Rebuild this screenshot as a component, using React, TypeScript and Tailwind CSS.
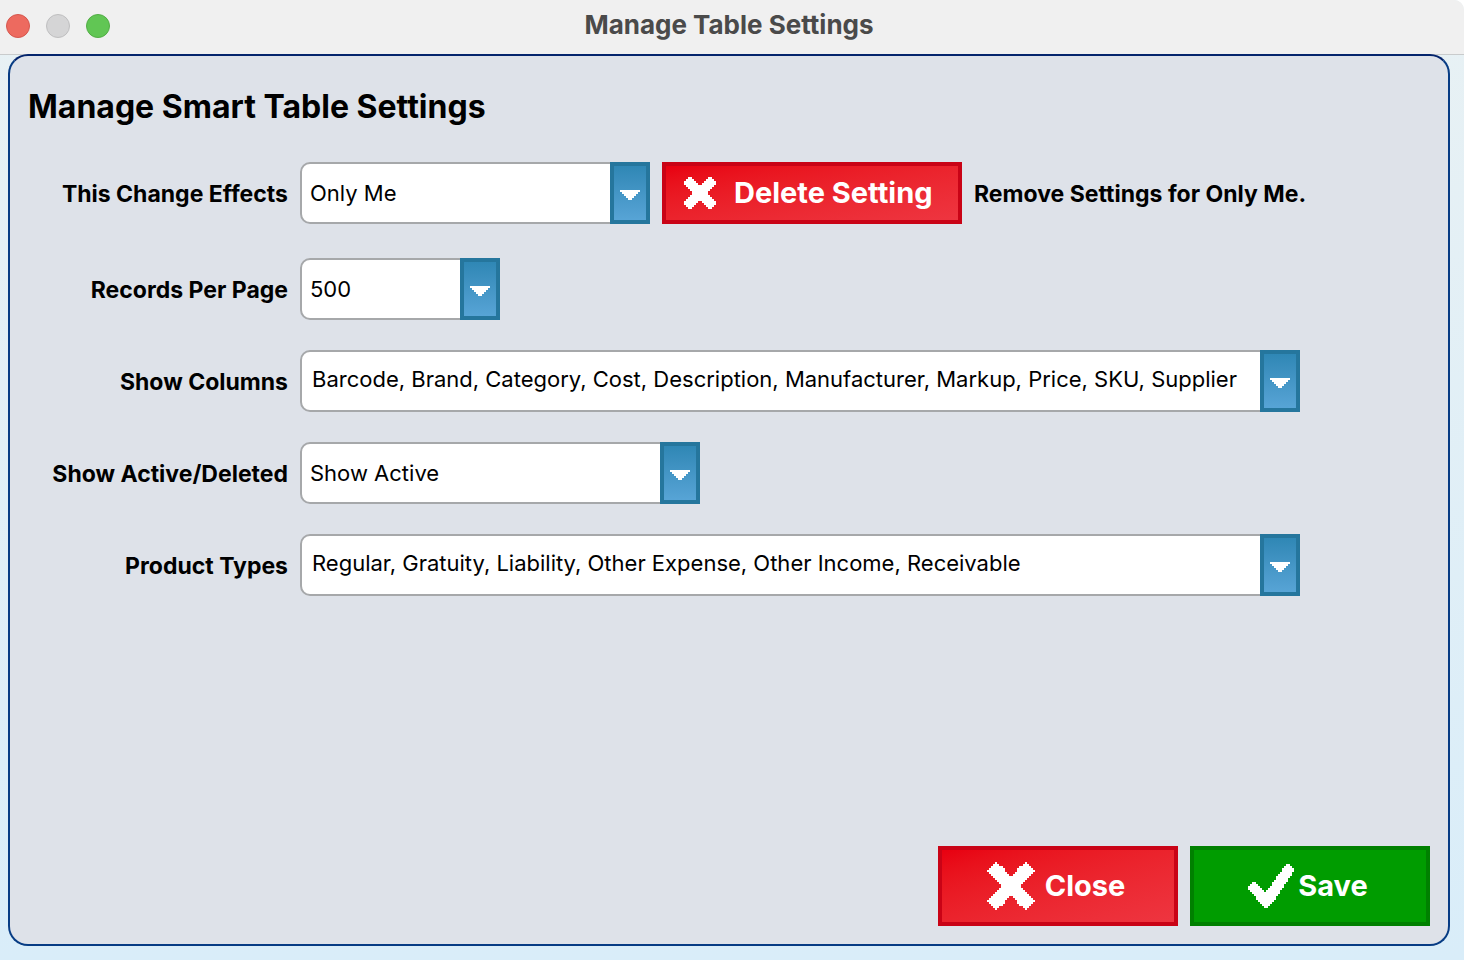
import React from "react";

type Field = {
  id: string;
  label: string;
  value: string;
  width: string;
  row: string;
  pad: string;
};

const fields: Field[] = [
  { id: "effects", label: "This Change Effects", value: "Only Me", width: "w-[350px]", row: "mb-[34px]", pad: "pl-2 pb-0" },
  { id: "records", label: "Records Per Page", value: "500", width: "w-[200px]", row: "mb-[30px]", pad: "pl-2 pb-0" },
  {
    id: "columns",
    label: "Show Columns",
    value: "Barcode, Brand, Category, Cost, Description, Manufacturer, Markup, Price, SKU, Supplier",
    width: "w-[1000px]",
    row: "mb-[30px]",
    pad: "pl-[10px] pb-1",
  },
  { id: "active", label: "Show Active/Deleted", value: "Show Active", width: "w-[400px]", row: "mb-[30px]", pad: "pl-2 pb-0" },
  {
    id: "types",
    label: "Product Types",
    value: "Regular, Gratuity, Liability, Other Expense, Other Income, Receivable",
    width: "w-[1000px]",
    row: "mb-[30px]",
    pad: "pl-[10px] pb-1",
  },
];

// Each span is [row, first cell, end cell] on the icon's pixel grid.
type Span = [number, number, number];

const smallCrossQuarter: Span[] = [
  [0, 2, 4], [1, 1, 5], [2, 0, 6], [3, 0, 7], [4, 1, 8], [5, 2, 8], [6, 3, 8], [7, 4, 8],
];

const largeCrossQuarter: Span[] = [
  [0, 4, 5], [1, 3, 6], [2, 2, 8], [3, 1, 9], [4, 0, 9], [5, 1, 10],
  [6, 2, 11], [7, 3, 12], [8, 4, 12], [9, 5, 12], [10, 6, 12], [11, 7, 12],
];

const checkSpans: Span[] = [
  [0, 19, 21], [1, 18, 22], [2, 17, 23], [3, 17, 23], [4, 16, 22], [5, 15, 22], [6, 14, 21], [7, 14, 20],
  [8, 13, 20], [9, 2, 4], [9, 12, 19], [10, 1, 5], [10, 12, 18], [11, 0, 6], [11, 11, 18], [12, 0, 7],
  [12, 10, 17], [13, 1, 8], [13, 9, 16], [14, 2, 16], [15, 3, 15], [16, 4, 14], [17, 4, 14], [18, 5, 13],
  [19, 6, 12], [20, 7, 11], [21, 8, 10],
];

const mirror = (quarter: Span[], size: number): Span[] =>
  quarter.flatMap(([y, a, b]): Span[] => [
    [y, a, b],
    [y, size - b, size - a],
    [size - 1 - y, a, b],
    [size - 1 - y, size - b, size - a],
  ]);

const smallCross = mirror(smallCrossQuarter, 16);
const largeCross = mirror(largeCrossQuarter, 24);

function PixelIcon({ spans, cols, rows, className }: { spans: Span[]; cols: number; rows: number; className: string }) {
  return (
    <svg viewBox={`0 0 ${cols} ${rows}`} className={className} fill="currentColor" shapeRendering="crispEdges" aria-hidden="true">
      <path d={spans.map(([y, a, b]) => `M${a} ${y}H${b}V${y + 1}H${a}Z`).join("")} />
    </svg>
  );
}

function SelectField({ field }: { field: Field }) {
  return (
    <div className={`relative h-[62px] shrink-0 ${field.width}`}>
      <select
        id={field.id}
        defaultValue={field.value}
        className={`h-full w-full appearance-none rounded-[10px] border-2 border-[#a6a8aa] bg-white pr-10 text-[22px] text-black outline-none ${field.pad}`}
      >
        <option>{field.value}</option>
      </select>
      <span className="pointer-events-none absolute inset-y-0 right-0 flex w-10 items-center justify-center border-4 border-[#25769d] bg-linear-to-b from-[#2f87b5] to-[#57a4d6] pt-1 text-white">
        <svg viewBox="0 0 20 10" className="h-[10px] w-5" fill="currentColor" shapeRendering="crispEdges" aria-hidden="true">
          <path d="M0 0H20V2H18V4H16V6H14V8H12V10H8V8H6V6H4V4H2V2H0Z" />
        </svg>
      </span>
    </div>
  );
}

export default function App() {
  return (
    <div className="flex min-h-screen flex-col rounded-tr-[10px] bg-linear-to-b from-[#e8f1f4] to-[#d9edf9] font-['Inter',sans-serif] text-black">
      <header className="grid h-[55px] shrink-0 grid-cols-[1fr_auto_1fr] items-center rounded-tr-[10px] border-b border-[#c9cbcc] bg-[#f0f0f0] pr-[6px] pb-[6px]">
        <div className="flex gap-4 pt-1 pl-[6px]">
          <button type="button" aria-label="Close window" className="size-6 rounded-full border border-[#d5574e] bg-[#ed6a5f]" />
          <button type="button" aria-label="Minimize window" disabled className="size-6 rounded-full border border-[#bfbfc0] bg-[#d5d5d6]" />
          <button type="button" aria-label="Zoom window" className="size-6 rounded-full border border-[#52ad45] bg-[#61c654]" />
        </div>
        <h1 className="text-[26px] font-bold text-[#4a4a4a]">Manage Table Settings</h1>
      </header>
      <main className="-mt-px mr-[14px] mb-[14px] ml-2 flex flex-1 flex-col rounded-[20px] border-2 border-[#073c84] border-t-[#04246c] bg-[#dee2e9] pb-[18px]">
        <h2 className="mt-6 mb-7 pl-[18px] text-[32px] leading-[54px] font-bold">Manage Smart Table Settings</h2>
        <form onSubmit={(e) => e.preventDefault()} className="flex flex-1 flex-col">
          {fields.map((field) => (
            <div key={field.id} className={`flex items-center ${field.row}`}>
              <label htmlFor={field.id} className="w-[290px] shrink-0 pt-[2px] pr-3 text-right text-[23px] font-bold">
                {field.label}
              </label>
              <SelectField field={field} />
              {field.id === "effects" && (
                <>
                  <button
                    type="button"
                    className="ml-3 flex h-[62px] w-[300px] shrink-0 items-center border-4 border-[#c90316] bg-linear-to-br from-[#e80010] to-[#ee3540] pl-[18px] text-[29px] font-bold whitespace-nowrap text-white"
                  >
                    <PixelIcon spans={smallCross} cols={16} rows={16} className="mr-[18px] size-8" />
                    Delete Setting
                  </button>
                  <p className="ml-3 pt-[2px] text-[23px] font-bold whitespace-nowrap">Remove Settings for Only Me.</p>
                </>
              )}
            </div>
          ))}
          <div className="mt-auto flex justify-end gap-3 pr-[18px] text-[29px] font-bold text-white">
            <button
              type="button"
              className="flex h-20 w-60 items-center justify-center gap-[10px] border-4 border-[#c90316] bg-linear-to-br from-[#e80010] to-[#ee3540] pr-1"
            >
              <PixelIcon spans={largeCross} cols={24} rows={24} className="size-12" />
              Close
            </button>
            <button type="submit" className="flex h-20 w-60 items-center justify-center gap-1 border-4 border-[#008000] bg-[#009c00] pr-1">
              <PixelIcon spans={checkSpans} cols={23} rows={22} className="h-11 w-[46px]" />
              Save
            </button>
          </div>
        </form>
      </main>
    </div>
  );
}
